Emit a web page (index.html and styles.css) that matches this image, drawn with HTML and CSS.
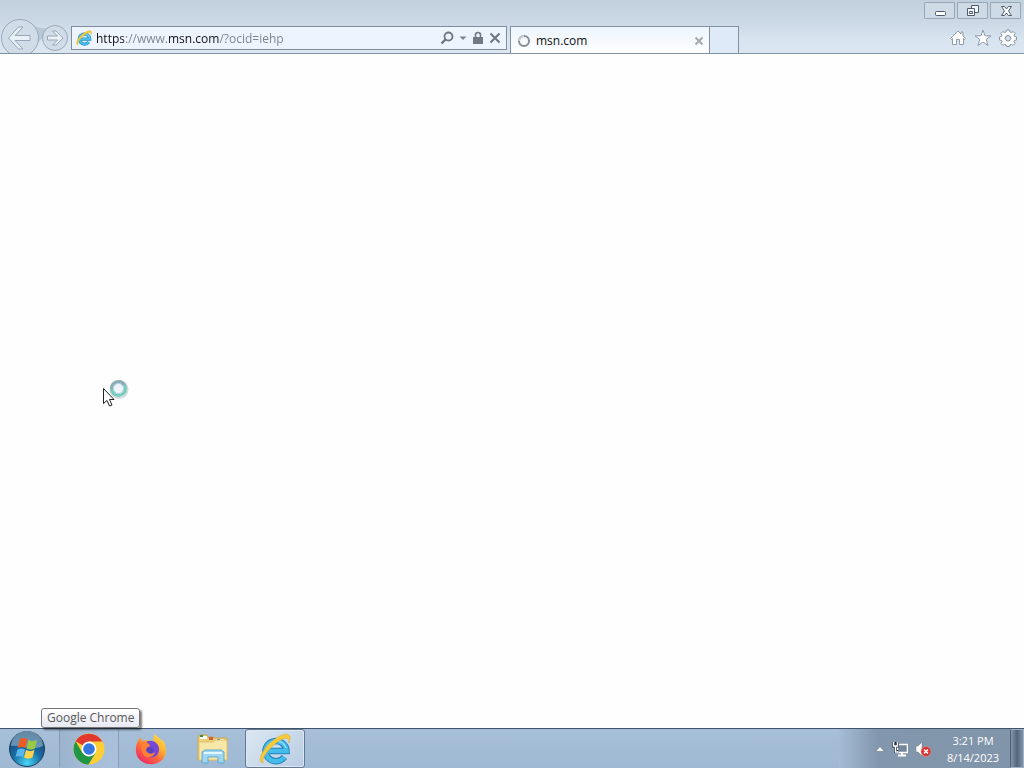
FILE: index.html
```html
<!DOCTYPE html>
<html lang="en">
<head>
    <meta charset="UTF-8">
    <meta name="viewport" content="width=device-width, initial-scale=1.0">
    <title>msn.com</title>
    <link rel="stylesheet" href="styles.css">
</head>
<body>
    <!-- Shared logo, used in the address bar and in the taskbar -->
    <svg class="symbols" aria-hidden="true">
        <symbol id="ie-logo" viewBox="0 0 32 32">
            <path d="M9 18h18.500A10.500 10 0 1 0 25.500 24" fill="none" stroke="#2383bd" stroke-width="6.500"/>
            <path d="M9 18h18.500A10.500 10 0 1 0 25.500 24" fill="none" stroke="#45bdec" stroke-width="4.500"/>
            <path d="M8 14c2-4 6-6 10-6 4 0 8 3 9 7" fill="none" stroke="#8edcf7" stroke-width="1.500"/>
            <path d="M4 30C-3 29 4 15 14 7.500 22 1 32-2 31 6l-1 4c1-7-5-5-10-2C11 14 2 25 4 30z" fill="#f6cb3a" stroke="#d9a321" stroke-width=".5"/>
        </symbol>
    </svg>

    <header class="browser-bar">
        <nav class="history">
            <button class="back" aria-label="Back">
                <svg width="40" height="40" viewBox="0 0 40 40">
                    <path d="M32 6c4 4 8 4 15 4l-5 10-4 5z" fill="#b9c8d7"/>
                    <circle cx="20" cy="20" r="18.500" fill="#d0dce7" stroke="#9ba9b8"/>
                    <path d="M18.500 9H23l-8 8.500h15v5H15l8 8.500h-4.500L8.500 20z" fill="#e9f0f6" stroke="#98a6b5" stroke-linejoin="round"/>
                </svg>
            </button>
            <button class="forward" aria-label="Forward">
                <svg width="28" height="28" viewBox="0 0 28 28">
                    <circle cx="14" cy="14" r="12.500" fill="#d0dce7" stroke="#9ba9b8"/>
                    <path d="M15 7h-3.500l5 5H6.500v4h10l-5 5H15l7-7z" fill="#e9f0f6" stroke="#98a6b5" stroke-linejoin="round"/>
                </svg>
            </button>
        </nav>

        <div class="window-buttons">
            <button aria-label="Minimize">
                <svg width="16" height="14" viewBox="0 0 16 14"><rect x="3.500" y="7.500" width="10" height="4" rx="1" fill="#fff" stroke="#4f5a6c"/></svg>
            </button>
            <button aria-label="Restore">
                <svg width="16" height="14" viewBox="0 0 16 14" fill="#f4f7fa" stroke="#4f5a6c"><path d="M6.500 1.500h7v7h-7z"/><path d="M2.500 4.500h7v7h-7z"/><path d="M4.500 7.500h3v2h-3z"/></svg>
            </button>
            <button aria-label="Close">
                <svg width="16" height="14" viewBox="0 0 16 14"><path d="M3.500 2.500h3L8.500 5l2-2.500h3L10.500 7l3 4.500h-3L8.500 9l-2 2.500h-3l3-4.500z" fill="#fff" stroke="#4f5a6c" stroke-linejoin="round"/></svg>
            </button>
        </div>

        <form class="address">
            <svg width="16" height="16" aria-hidden="true"><use href="#ie-logo"/></svg>
            <input type="text" class="url" aria-label="Address" value="https://www.msn.com/?ocid=iehp" spellcheck="false">
            <button type="button" aria-label="Search">
                <svg width="14" height="14" viewBox="0 0 14 14" fill="none" stroke="#6d757d"><circle cx="8.500" cy="5.500" r="4" stroke-width="1.800"/><path d="M5.500 8.500 1.500 12.500" stroke-width="2.400"/></svg>
            </button>
            <button type="button" aria-label="Show address list">
                <svg width="8" height="14" viewBox="0 0 8 14"><path d="M.5 5.500h7L4 9z" fill="#7b838b"/></svg>
            </button>
            <button type="button" aria-label="Security report">
                <svg width="12" height="14" viewBox="0 0 12 14"><path d="M3.500 7V4a2.500 2.500 0 0 1 5 0v3" fill="none" stroke="#727981" stroke-width="1.600"/><rect x="1" y="6" width="10" height="7" fill="#727981"/></svg>
            </button>
            <button type="button" aria-label="Stop">
                <svg width="12" height="14" viewBox="0 0 12 14"><path d="M1.500 2.500l9 9M10.500 2.500l-9 9" stroke="#6d757d" stroke-width="2"/></svg>
            </button>
        </form>

        <div class="tab-row">
            <div class="tab">
                <svg width="14" height="14" viewBox="0 0 14 14" fill="none" stroke-width="2" aria-hidden="true"><circle cx="7" cy="7" r="5" stroke="#858c93"/><path d="M2 7a5 5 0 0 1 5-5" stroke="#c3cad0"/></svg>
                <span>msn.com</span>
                <button aria-label="Close tab">
                    <svg width="10" height="10" viewBox="0 0 10 10"><path d="M1.500 1.500l7 7M8.500 1.500l-7 7" stroke="#a4a8ad" stroke-width="2"/></svg>
                </button>
            </div>
            <button class="new-tab" aria-label="New tab"></button>
            <div class="tools">
                <button aria-label="Home">
                    <svg width="18" height="18" viewBox="0 0 18 18" fill="#fff" stroke="#8e9cab" stroke-linejoin="round"><path d="M1.500 9.500 9 2l3 3V3h2v4l2.500 2.500-1 1-1-1v6h-4v-5h-3v5h-4v-6l-1 1z"/></svg>
                </button>
                <button aria-label="Favorites">
                    <svg width="18" height="18" viewBox="0 0 18 18" fill="#fff" stroke="#8e9cab" stroke-linejoin="round"><path d="M9 1l2 5.800h6l-4.800 3.700 1.800 6L9 13l-5 3.500 1.800-6L1 6.800h6z"/></svg>
                </button>
                <button aria-label="Tools">
                    <svg width="18" height="18" viewBox="0 0 18 18" fill="#fff" stroke="#8494a2" stroke-linejoin="round"><path d="M7.500 1h3l.5 2 1.300.6 1.800-1.100 2 2L15 6.300l.5 1.200 2 .5v2.900l-2 .5-.5 1.200 1.100 1.800-2 2-1.800-1.100-1.300.6-.5 1.600h-3L7 15.900l-1.300-.6-1.800 1.100-2-2L3 12.600l-.5-1.200-2-.5V8l2-.5L3 6.300 1.900 4.500l2-2 1.800 1.100L7 3z"/><circle cx="9" cy="9.300" r="2.700" fill="#d3e0ec"/></svg>
                </button>
            </div>
        </div>
    </header>

    <main class="page">
        <div class="busy-pointer">
            <svg width="28" height="30" viewBox="0 0 28 30" aria-hidden="true">
                <circle cx="17" cy="10.500" r="8.500" fill="none" stroke="#d3dadc" stroke-width="2"/>
                <circle cx="16.500" cy="9.500" r="7" fill="#eef4f9" stroke="#72cdbb" stroke-width="3"/>
                <path d="M9.500 10a7 7 0 0 1 13-4" fill="none" stroke="#91a9b5" stroke-width="2.500"/>
                <circle cx="16.500" cy="9.500" r="5" fill="none" stroke="#b5c9e2"/>
                <path d="M1.500 9.500v15l3.500-3 2.500 5.500 2.500-1-2.500-5.500h4.500z" fill="#fff" stroke="#222"/>
            </svg>
        </div>
    </main>

    <footer class="taskbar">
        <button class="start" aria-label="Start">
            <svg width="38" height="38" viewBox="0 0 38 38">
                <defs>
                    <radialGradient id="orb" cx=".5" cy=".9" r=".9">
                        <stop offset="0" stop-color="#46d6f4"/>
                        <stop offset=".45" stop-color="#1a6da8"/>
                        <stop offset="1" stop-color="#153d63"/>
                    </radialGradient>
                </defs>
                <circle cx="19" cy="19" r="17.500" fill="url(#orb)" stroke="#1c3e5c"/>
                <path d="M3 16a16 15 0 0 1 32 0c-10 5-22-2-32 0z" fill="#a8c6da" opacity=".55"/>
                <path d="M12 9c3-1.500 5-1 7.500 0l-2 9c-3-1.500-5-1.500-8 0z" fill="#ee5b25"/>
                <path d="M20.500 10c3 1.500 5 1.500 8.500 0l-2 8.500c-3 1.500-5 1.500-8.500 0z" fill="#9cc942"/>
                <path d="M9.500 19.500c3-1.500 5-1.500 7.500 0l-2 7.500c-3-1.500-5-1.500-7.500 0z" fill="#58b7ee"/>
                <path d="M18 20c3 1.500 5 1.500 8.500 0l-2 7.500c-3 1.500-5 1.500-8.500 0z" fill="#ffd34a"/>
            </svg>
        </button>
        <div class="apps">
            <button class="app pinned" aria-label="Google Chrome" aria-describedby="chrome-tip">
                <svg width="32" height="32" viewBox="0 0 32 32">
                    <circle cx="16" cy="16" r="15.500" fill="#ffce35"/>
                    <path d="M16 16 2.600 8.200A15.500 15.500 0 0 1 29.400 8.500H16z" fill="#df3a2d"/>
                    <path d="M2.600 8.200A15.500 15.500 0 0 0 15.500 31.500L22.500 20 9.500 20z" fill="#229647"/>
                    <circle cx="16" cy="16" r="7.500" fill="#fff"/>
                    <circle cx="16" cy="16" r="5.800" fill="#3577df"/>
                </svg>
            </button>
            <button class="app" aria-label="Firefox">
                <svg width="32" height="32" viewBox="0 0 32 32">
                    <defs>
                        <linearGradient id="fox" x1=".85" y1="0" x2=".2" y2=".9">
                            <stop offset="0" stop-color="#ffe04a"/>
                            <stop offset=".4" stop-color="#ffae2e"/>
                            <stop offset=".65" stop-color="#ff6b3a"/>
                            <stop offset="1" stop-color="#ee2f62"/>
                        </linearGradient>
                    </defs>
                    <path d="M20 1c2 3 5 4 7 7l1-1c4 7 4 14 0 19-6 7-18 7-24 0C0 21 0 14 3 8l2-4 2 4 5-1 7 2c-1-3-1-5 1-8z" fill="url(#fox)"/>
                    <path d="M11 9c5-3 12 0 13 6 1 7-5 11-11 9-5-2-6-7-4-10l5-1z" fill="#7547d4"/>
                    <path d="M7 9c4-1 7 1 8 4-2 1-4 2-4 4 1 4 6 5 9 2-1 6-9 7-12 2-2-4-2-8-1-12z" fill="#ff8135"/>
                    <path d="M12 15c2-1 4-1 6 0 2 2 0 6-3 5-3 0-4-3-3-5z" fill="#5942be"/>
                </svg>
            </button>
            <button class="app" aria-label="Windows Explorer">
                <svg width="32" height="32" viewBox="0 0 32 32">
                    <path d="M1 4l1-2h8l1 2h5l1 1h13v22H1z" fill="#edcf76" stroke="#c7a750"/>
                    <path d="M3 3h7v3H3z" fill="#fff"/><path d="M3 2h3v2H3z" fill="#2a9851"/><path d="M12 4h4v3h-4z" fill="#d65c35"/><path d="M19 6h8v3h-8z" fill="#fff"/><path d="M20 6h3v1h-3z" fill="#337dbc"/>
                    <path d="M2 9h14l2-2h12v20H2z" fill="#f8e8a7" stroke="#dcc277"/>
                    <path d="M5 30V19l3-2h16l3 2v11h-6v-6H11v6z" fill="#9ed5f0" stroke="#5ea9d1"/>
                    <path d="M7 20h18" stroke="#e2f6ff" stroke-width="2"/>
                </svg>
            </button>
            <button class="app running" aria-label="Internet Explorer">
                <svg width="32" height="32"><use href="#ie-logo"/></svg>
            </button>
        </div>
        <div class="tray">
            <button aria-label="Show hidden icons">
                <svg width="10" height="6" viewBox="0 0 10 6"><path d="M.5 5.500 5 .5l4.500 5z" fill="#f3f8fc" stroke="#53687d" stroke-width=".5"/></svg>
            </button>
            <button aria-label="Network">
                <svg width="16" height="16" viewBox="0 0 16 16"><path d="M5.500 3.500h10v8h-10z" fill="#73869a" stroke="#fff" stroke-width="1.500"/><path d="M10 12v2M6 14.500h8" stroke="#fff" stroke-width="2"/><path d="M1.500 1v4h4V1M3.500 1v9.500h3" fill="none" stroke="#263546" stroke-width="3"/><path d="M1.500 1v4h4V1M3.500 5v6h3" fill="none" stroke="#fff" stroke-width="1.500"/></svg>
            </button>
            <button aria-label="Volume, muted">
                <svg width="16" height="16" viewBox="0 0 16 16"><path d="M1 5h2l4-4v14l-4-4H1z" fill="#fff" stroke="#657586" stroke-width=".5"/><circle cx="11" cy="10.500" r="5" fill="#d63532" stroke="#e78d8a" stroke-width=".7"/><path d="M9 8.500l4 4M13 8.500l-4 4" stroke="#fff" stroke-width="1.500"/></svg>
            </button>
            <time class="clock" datetime="2023-08-14T15:21"><span>3:21 PM</span><span>8/14/2023</span></time>
        </div>
        <button class="show-desktop" aria-label="Show desktop"></button>
        <div class="tooltip" id="chrome-tip" role="tooltip">Google Chrome</div>
    </footer>
</body>
</html>
```
FILE: styles.css
```css
* {
    box-sizing: border-box;
}

body {
    display: flex;
    flex-direction: column;
    min-height: 100vh;
    margin: 0;
    background-color: #fefefe;
    color: #111;
    font-family: "Open Sans", "Noto Sans", sans-serif;
    font-size: 12px;
    line-height: 16px;
}

button {
    display: flex;
    align-items: center;
    justify-content: center;
    flex: none;
    padding: 0;
    border: none;
    background: none;
}

svg {
    display: block;
    flex: none;
}

.symbols {
    position: absolute;
    width: 0;
    height: 0;
}

/* Browser bar */
.browser-bar {
    display: grid;
    grid-template-columns: 71px 436fr 517fr;
    grid-template-rows: 26px 27px;
    overflow: hidden;
    background: linear-gradient(#c2cfdd, #cbd8e5 40%, #d8e4f0 75%, #dbe6f1);
    border-bottom: 1px solid #8292a2;
}

.history {
    grid-row: 1 / 3;
    display: flex;
    align-items: center;
    gap: 1px;
    height: 40px;
    margin-top: 18px;
}

.back svg {
    overflow: visible;
}

.window-buttons {
    grid-column: 2 / 4;
    display: flex;
    justify-content: flex-end;
    gap: 2px;
    padding: 2px 3px 0 0;
}

.window-buttons button {
    width: 31px;
    height: 17px;
    border: 1px solid #98a6b6;
    border-radius: 1px;
    background-color: #cedae6;
}

.address {
    grid-column: 2;
    display: flex;
    align-items: center;
    gap: 5px;
    height: 24px;
    padding: 0 5px 0 4px;
    border: 1px solid #7e8d9f;
    background-color: #eef4fd;
}

/* The scheme and the domain stand out from the rest of the address */
.url {
    flex: 1;
    min-width: 0;
    height: 20px;
    margin-left: -1px;
    padding: 0;
    border: none;
    outline: none;
    background: linear-gradient(to right, #111 28px, #7c8288 28px, #7c8288 72px, #111 72px, #111 123px, #7c8288 123px);
    -webkit-background-clip: text;
    background-clip: text;
    color: transparent;
    caret-color: #111;
    font: inherit;
}

.tab-row {
    display: flex;
    min-width: 0;
    padding-left: 3px;
}

.tab {
    display: flex;
    align-items: center;
    gap: 5px;
    flex: 0 1 200px;
    min-width: 0;
    padding: 2px 5px 0 6px;
    border: 1px solid #8292a2;
    border-bottom: none;
    background: linear-gradient(#edf5fe, #fdfeff);
}

.tab span {
    flex: 1;
}

.new-tab {
    width: 29px;
    border: 1px solid #8292a2;
    border-width: 1px 1px 0 0;
    background-color: #dfeaf8;
}

.tools {
    display: flex;
    align-items: center;
    gap: 7px;
    height: 24px;
    margin-left: auto;
    padding-right: 7px;
}

/* Empty document while the page loads */
.page {
    position: relative;
    flex: 1;
}

.busy-pointer {
    position: absolute;
    left: 102px;
    top: 325px;
}

/* Taskbar */
.taskbar {
    position: relative;
    display: flex;
    height: 40px;
    background: linear-gradient(#a7bfd8, #9fb9d4);
    border-top: 1px solid #3f546b;
}

.start {
    width: 54px;
}

.apps {
    display: flex;
    flex: 1;
    gap: 2px;
    padding-left: 5px;
}

.app {
    width: 60px;
    border: 1px solid transparent;
}

.pinned {
    border-color: transparent #879db5;
    background: linear-gradient(to right, #9bb3cc, #a5bdd8 50%, #a9c1dc);
}

.running {
    border-color: #64798f;
    border-radius: 3px;
    background: linear-gradient(135deg, #dce7f2, #b9cde2);
    box-shadow: inset 0 0 0 1px #dae6f3;
}

.tray {
    display: flex;
    align-items: center;
    gap: 7px;
    padding: 0 2px 0 36px;
    background: linear-gradient(to right, #a4bcd6, #8296ad 40px, #8195aa);
}

.clock {
    display: flex;
    flex-direction: column;
    width: 70px;
    color: #fff;
    font-size: 11px;
    line-height: 17px;
    text-align: center;
}

.show-desktop {
    width: 14px;
    border: 1px solid #a1b1c2;
    border-left-color: #4d6074;
    background: linear-gradient(to right, #8496a9, #51667c 50%, #8294a8);
}

.tooltip {
    position: absolute;
    left: 41px;
    bottom: 40px;
    padding: 1px 5px;
    border: 1px solid #777;
    border-radius: 3px;
    background: linear-gradient(#fff, #e7e9f2);
    box-shadow: 2px 2px 2px rgba(0, 0, 0, 0.5);
    color: #575757;
}
```
